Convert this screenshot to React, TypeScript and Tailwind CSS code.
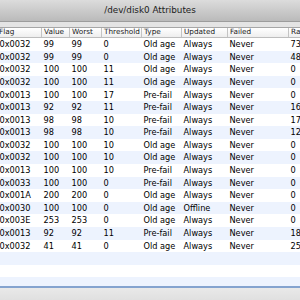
import React from "react";

type Row = [string, string, string, string, string, string, string, string];

const rows: Row[] = [
  ["0x0032", "99", "99", "0", "Old age", "Always", "Never", "73"],
  ["0x0032", "99", "99", "0", "Old age", "Always", "Never", "48"],
  ["0x0032", "100", "100", "11", "Old age", "Always", "Never", "0"],
  ["0x0032", "100", "100", "11", "Old age", "Always", "Never", "0"],
  ["0x0013", "100", "100", "17", "Pre-fail", "Always", "Never", "0"],
  ["0x0013", "92", "92", "11", "Pre-fail", "Always", "Never", "16"],
  ["0x0013", "98", "98", "10", "Pre-fail", "Always", "Never", "17"],
  ["0x0013", "98", "98", "10", "Pre-fail", "Always", "Never", "12"],
  ["0x0032", "100", "100", "10", "Old age", "Always", "Never", "0"],
  ["0x0032", "100", "100", "10", "Old age", "Always", "Never", "0"],
  ["0x0013", "100", "100", "10", "Pre-fail", "Always", "Never", "0"],
  ["0x0033", "100", "100", "0", "Pre-fail", "Always", "Never", "0"],
  ["0x001A", "200", "200", "0", "Old age", "Always", "Never", "0"],
  ["0x0030", "100", "100", "0", "Old age", "Offline", "Never", "0"],
  ["0x003E", "253", "253", "0", "Old age", "Always", "Never", "0"],
  ["0x0013", "92", "92", "11", "Pre-fail", "Always", "Never", "18"],
  ["0x0032", "41", "41", "0", "Old age", "Always", "Never", "25"],
];

const headers = ["Flag", "Value", "Worst", "Threshold", "Type", "Updated", "Failed", "Raw"];

// fixed column widths, first column is cut by the window edge
const cols = "grid grid-cols-[44px_28px_32px_40px_40px_46px_61px_40px]";

const App: React.FC = () => {
  return (
    <div className="w-[300px] h-[300px] overflow-hidden bg-white font-['DejaVu_Sans',sans-serif] text-black">
      {/* title bar */}
      <div className="h-[22px] flex items-center justify-center bg-gradient-to-b from-[#dcdcdc] to-[#bababa] border-b border-[#9c9c9c] text-[8.8px] text-[#1c1c1c]">
        /dev/disk0 Attributes
      </div>
      <div className="h-[6px] bg-[#e4e4e4] border-b border-[#a6a6a6]" />

      {/* column headers */}
      <div className={`${cols} ml-[-3px] h-[10px] bg-gradient-to-b from-white to-[#eeeeee] border-b border-[#bdbdbd] text-[7.3px] text-[#222]`}>
        {headers.map((h, i) => (
          <div key={h} className={`pl-[2px] flex items-center whitespace-nowrap overflow-hidden ${i > 0 ? "border-l border-[#c4c4c4]" : ""}`}>
            {h}
          </div>
        ))}
      </div>

      {/* rows */}
      <div className="h-[248px] overflow-hidden flex flex-col">
        {rows.map((r, i) => (
          <div key={i} className={`${cols} ml-[-3px] h-[12.6px] shrink-0 text-[8.2px] ${i % 2 ? "bg-[#edf3fe]" : "bg-white"}`}>
            {r.map((c, j) => (
              <div key={j} className="pl-[2.5px] flex items-center whitespace-nowrap overflow-hidden">
                {c}
              </div>
            ))}
          </div>
        ))}
        <div className="h-[12.6px] shrink-0 bg-[#edf3fe]" />
        <div className="h-[12.6px] shrink-0 bg-white" />
        <div className="h-[12.6px] shrink-0 bg-[#edf3fe]" />
      </div>

      <div className="h-[2px] bg-[#84a3cf]" />
      <div className="h-[12px] bg-gradient-to-b from-[#e9e9e9] to-[#e0e0e0]" />
    </div>
  );
};

export default App;
